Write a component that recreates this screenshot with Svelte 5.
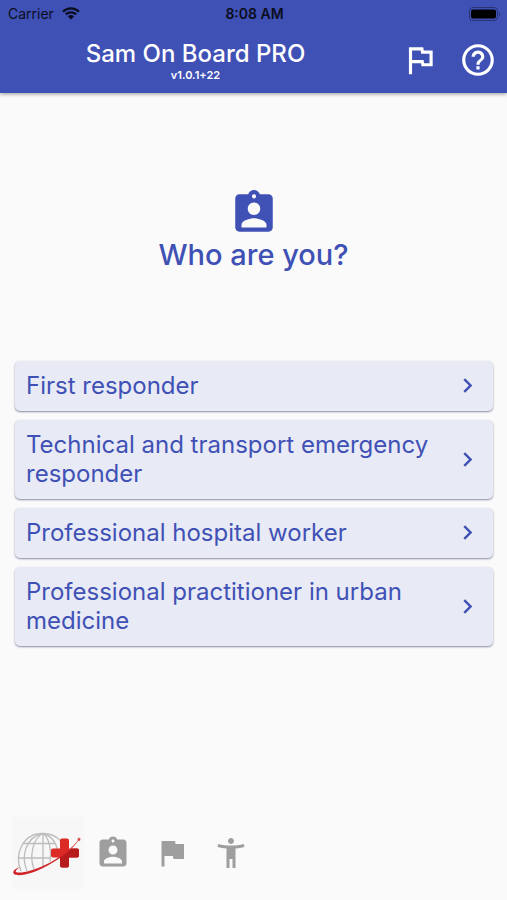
<script>
  const roles = [
    "First responder",
    "Technical and transport emergency responder",
    "Professional hospital worker",
    "Professional practitioner in urban medicine",
  ];

  const tabs = [
    {
      label: "Role",
      path: "M19 3h-4.18C14.4 1.84 13.3 1 12 1s-2.4.84-2.82 2H5c-1.1 0-2 .9-2 2v14c0 1.1.9 2 2 2h14c1.1 0 2-.9 2-2V5c0-1.1-.9-2-2-2zm-7 0c.55 0 1 .45 1 1s-.45 1-1 1-1-.45-1-1 .45-1 1-1zm0 4c1.66 0 3 1.34 3 3s-1.34 3-3 3-3-1.34-3-3 1.34-3 3-3zm6 12H6v-1.4c0-2 4-3.1 6-3.1s6 1.1 6 3.1V19z",
    },
    { label: "Language", path: "M14.4 6L14 4H5v17h2v-7h5.6l.4 2h7V6z" },
    {
      label: "Patient",
      path: "M20.5 6c-2.61.7-5.67 1-8.5 1s-5.89-.3-8.5-1L3 8c1.86.5 4 .83 6 1v13h2v-6h2v6h2V9c2-.17 4.14-.5 6-1l-.5-2zM12 6c1.1 0 2-.9 2-2s-.9-2-2-2-2 .9-2 2 .9 2 2 2z",
    },
  ];

  let selected = $state("");
</script>

<div class="app">
  <header>
    <div class="status">
      <span class="carrier">
        Carrier
        <svg class="wifi" viewBox="0 0 18 13" aria-hidden="true">
          <path d="M1 4.6a11.5 11.5 0 0 1 16 0M3.8 7.4a7.5 7.5 0 0 1 10.4 0" fill="none" stroke="currentColor" stroke-width="2.2" />
          <path d="M5.9 9.5a4.5 4.5 0 0 1 6.2 0L9 12.6z" fill="currentColor" />
        </svg>
      </span>
      <span class="time">8:08 AM</span>
      <svg class="battery" viewBox="0 0 32 14" aria-hidden="true">
        <rect x="0.5" y="0.5" width="28" height="13" rx="3.5" fill="none" stroke="#000" stroke-opacity="0.35" />
        <rect x="2" y="2.5" width="25" height="9" rx="2" />
        <path d="M30 5v4c1.3-.6 1.3-3.4 0-4z" fill-opacity="0.4" />
      </svg>
    </div>

    <div class="toolbar">
      <div class="title">
        <h1>Sam On Board PRO</h1>
        <span class="version">v1.0.1+22</span>
      </div>
      <div class="actions">
        <button aria-label="Language">
          <svg viewBox="0 0 24 24"><path d="M12.36 6l.4 2H18v6h-3.36l-.4-2H7V6h5.36M14 4H5v17h2v-7h5.6l.4 2h7V6h-5.6L14 4z" /></svg>
        </button>
        <button aria-label="Help">
          <svg viewBox="0 0 24 24"><path d="M11 18h2v-2h-2v2zm1-16C6.48 2 2 6.48 2 12s4.48 10 10 10 10-4.48 10-10S17.52 2 12 2zm0 18c-4.41 0-8-3.59-8-8s3.59-8 8-8 8 3.59 8 8-3.59 8-8 8zm0-14c-2.21 0-4 1.79-4 4h2c0-1.1.9-2 2-2s2 .9 2 2c0 2-3 1.75-3 5h2c0-2.25 3-2.5 3-5 0-2.21-1.79-4-4-4z" /></svg>
        </button>
      </div>
    </div>
  </header>

  <main>
    <section class="intro">
      <svg viewBox="0 0 24 24" aria-hidden="true"><path d={tabs[0].path} /></svg>
      <h2>Who are you?</h2>
    </section>

    <div class="roles">
      {#each roles as role}
        <button class="role" onclick={() => (selected = role)}>
          <span>{role}</span>
          <svg viewBox="0 0 24 24" aria-hidden="true"><path d="M10 6L8.59 7.41 13.17 12l-4.58 4.59L10 18l6-6z" /></svg>
        </button>
      {/each}
    </div>
  </main>

  <nav>
    <button class="logo" aria-label="Home">
      <svg viewBox="0 0 72 72" aria-hidden="true">
        <g fill="none" stroke="#bdbdbd" stroke-width="1.3">
          <path d="M9 54C2 38 10 16.500 31 16.500c8 0 14 3 18 8" />
          <path d="M15 54c-6-14-2-34 16-37.500M22 52c-5-13-1-31 9-35.500M31 16.500v33M31 16.500c6 4 9 17 7 28M31 16.500c8 2 13 9 15 18" />
          <path d="M11 26.500h32M6 41h33" />
        </g>
        <path d="M50 21.500h5q2 0 2 2v8h8q2 0 2 2v5q0 2-2 2h-8v8q0 2-2 2h-5q-2 0-2-2v-8h-7q-2 0-2-2v-5q0-2 2-2h7v-8q0-2 2-2z" fill="#dc2a24" />
        <path d="M59 31.500h6q2 0 2 2v5q0 2-2 2h-8v8q0 2-2 2h-5q-2 0-2-2v-8q6-4 11-9z" fill="#b71c1c" />
        <path d="M8 50C2 52 0 55 2 57c4 3 17 0 29-6C45 44 58 35 67 23 57 34 46 42 33 48 20 54 8 57 4 55c-1-1 1-3 4-5z" fill="#cf2427" />
        <path d="M57 33q6-5 9.500-10" fill="none" stroke="#d9605c" stroke-width="0.800" />
        <path d="M67 20.300l.6 1.200 1.400.2-1 1 .2 1.400-1.200-.7-1.200.7.200-1.400-1-1 1.400-.2z" fill="#d63a3a" />
      </svg>
    </button>
    {#each tabs as tab}
      <button class="tab" aria-label={tab.label}>
        <svg viewBox="0 0 24 24" aria-hidden="true"><path d={tab.path} /></svg>
      </button>
    {/each}
  </nav>
</div>

<style>
  :global(body) {
    background: #fafafa;
  }

  .app {
    display: flex;
    flex-direction: column;
    min-height: 100vh;
    font-family: Inter, Roboto, sans-serif;
    color: #3f51b5;
  }

  button {
    padding: 0;
    border: none;
    background: none;
    font: inherit;
    color: inherit;
    cursor: pointer;
  }

  svg {
    display: block;
    fill: currentColor;
  }

  header {
    background: #3f51b5;
    color: #fff;
    box-shadow: 0 1px 4px rgba(0, 0, 0, 0.4);
  }

  .status {
    display: grid;
    grid-template-columns: 1fr auto 1fr;
    align-items: center;
    height: 27px;
    padding: 0 6px 0 8px;
    font-size: 14px;
    color: #0b0d20;
  }

  .carrier {
    display: flex;
    align-items: center;
    gap: 8px;
  }

  .wifi {
    width: 18px;
    height: 13px;
  }

  .time {
    font-weight: 600;
  }

  .battery {
    width: 32px;
    height: 14px;
    justify-self: end;
    fill: #000;
  }

  .toolbar {
    display: flex;
    align-items: center;
    height: 66px;
    padding-right: 10px;
  }

  .title {
    flex: 1;
    display: flex;
    flex-direction: column;
    align-items: center;
  }

  h1 {
    margin: 0;
    font-size: 24px;
    line-height: 30px;
    font-weight: 500;
  }

  .version {
    font-size: 11px;
    line-height: 13px;
    font-weight: 600;
  }

  .actions {
    display: flex;
    gap: 20px;
    padding-left: 10px;
  }

  .actions svg {
    width: 38px;
    height: 38px;
  }

  main {
    flex: 1;
  }

  .intro {
    display: flex;
    flex-direction: column;
    align-items: center;
    padding: 95px 16px 89px;
  }

  .intro svg {
    width: 50px;
    height: 50px;
  }

  h2 {
    margin: 0;
    font-size: 29px;
    line-height: 34px;
    font-weight: 500;
  }

  .roles {
    display: flex;
    flex-direction: column;
    gap: 9px;
    padding: 0 14px 0 15px;
  }

  .role {
    display: flex;
    align-items: center;
    justify-content: space-between;
    gap: 12px;
    padding: 10px 11px 11px;
    border-radius: 5px;
    background: #e8eaf6;
    box-shadow: 0 1px 2px rgba(30, 30, 80, 0.5);
    font-size: 24px;
    line-height: 29px;
    text-align: left;
  }

  .role svg {
    flex: none;
    width: 29px;
    height: 29px;
  }

  nav {
    display: flex;
    align-items: center;
    padding: 0 12px 11px;
    gap: 23px;
    color: #9e9e9e;
  }

  .logo {
    margin-right: -12px;
    background: #f7f7f7;
  }

  .logo svg {
    width: 72px;
    height: 72px;
  }

  .tab svg {
    width: 36px;
    height: 36px;
  }
</style>
